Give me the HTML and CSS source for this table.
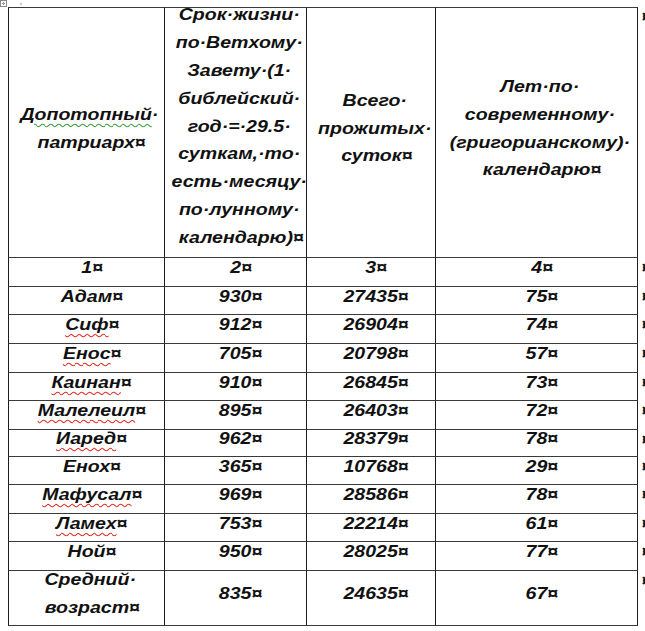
FILE: index.html
```html
<!DOCTYPE html>
<html lang="ru">
<head>
<meta charset="utf-8">
<title>Допотопные патриархи</title>
<link rel="stylesheet" href="styles.css">
</head>
<body>
<div class="topbar">
  <svg class="handle" width="8" height="7" viewBox="0 0 8 7"><rect x="0.5" y="0.5" width="6" height="6" fill="#fff" stroke="#8a8a8a"/><path d="M2 3.5h3M3.5 2v3" stroke="#9a9a9a" stroke-width="1"/></svg>
  <span class="tick"></span>
</div>
<div class="doc">
  <div class="grid">
    <div class="cell c1 top"><div class="t"><span class="green">Допотопный</span><span class="e">·</span><br>патриарх<span class="e">¤</span></div></div>
    <div class="cell top h2"><div class="t">Срок·жизни<span class="e">·</span><br>по·Ветхому<span class="e">·</span><br>Завету·(1<span class="e">·</span><br>библейский<span class="e">·</span><br>год·=·29.5<span class="e">·</span><br>суткам,·то<span class="e">·</span><br>есть·месяцу<span class="e">·</span><br>по·лунному<span class="e">·</span><br>календарю)<span class="e">¤</span></div></div>
    <div class="cell top"><div class="t">Всего<span class="e">·</span><br>прожитых<span class="e">·</span><br>суток<span class="e">¤</span></div></div>
    <div class="cell top"><div class="t">Лет·по<span class="e">·</span><br>современному<span class="e">·</span><br>(григорианскому)<span class="e">·</span><br>календарю<span class="e">¤</span></div></div>
    <div class="mark">¤</div>

    <div class="cell c1"><div class="t">1<span class="e">¤</span></div></div>
    <div class="cell"><div class="t">2<span class="e">¤</span></div></div>
    <div class="cell"><div class="t">3<span class="e">¤</span></div></div>
    <div class="cell"><div class="t">4<span class="e">¤</span></div></div>
    <div class="mark">¤</div>

    <div class="cell c1"><div class="t">Адам<span class="e">¤</span></div></div>
    <div class="cell"><div class="t">930<span class="e">¤</span></div></div>
    <div class="cell"><div class="t">27435<span class="e">¤</span></div></div>
    <div class="cell"><div class="t">75<span class="e">¤</span></div></div>
    <div class="mark">¤</div>

    <div class="cell c1"><div class="t"><span class="sp">Сиф</span><span class="e">¤</span></div></div>
    <div class="cell"><div class="t">912<span class="e">¤</span></div></div>
    <div class="cell"><div class="t">26904<span class="e">¤</span></div></div>
    <div class="cell"><div class="t">74<span class="e">¤</span></div></div>
    <div class="mark">¤</div>

    <div class="cell c1"><div class="t"><span class="sp">Енос</span><span class="e">¤</span></div></div>
    <div class="cell"><div class="t">705<span class="e">¤</span></div></div>
    <div class="cell"><div class="t">20798<span class="e">¤</span></div></div>
    <div class="cell"><div class="t">57<span class="e">¤</span></div></div>
    <div class="mark">¤</div>

    <div class="cell c1"><div class="t"><span class="sp">Каинан</span><span class="e">¤</span></div></div>
    <div class="cell"><div class="t">910<span class="e">¤</span></div></div>
    <div class="cell"><div class="t">26845<span class="e">¤</span></div></div>
    <div class="cell"><div class="t">73<span class="e">¤</span></div></div>
    <div class="mark">¤</div>

    <div class="cell c1"><div class="t"><span class="sp">Малелеил</span><span class="e">¤</span></div></div>
    <div class="cell"><div class="t">895<span class="e">¤</span></div></div>
    <div class="cell"><div class="t">26403<span class="e">¤</span></div></div>
    <div class="cell"><div class="t">72<span class="e">¤</span></div></div>
    <div class="mark">¤</div>

    <div class="cell c1"><div class="t"><span class="sp">Иаред</span><span class="e">¤</span></div></div>
    <div class="cell"><div class="t">962<span class="e">¤</span></div></div>
    <div class="cell"><div class="t">28379<span class="e">¤</span></div></div>
    <div class="cell"><div class="t">78<span class="e">¤</span></div></div>
    <div class="mark">¤</div>

    <div class="cell c1"><div class="t">Енох<span class="e">¤</span></div></div>
    <div class="cell"><div class="t">365<span class="e">¤</span></div></div>
    <div class="cell"><div class="t">10768<span class="e">¤</span></div></div>
    <div class="cell"><div class="t">29<span class="e">¤</span></div></div>
    <div class="mark">¤</div>

    <div class="cell c1"><div class="t"><span class="sp">Мафусал</span><span class="e">¤</span></div></div>
    <div class="cell"><div class="t">969<span class="e">¤</span></div></div>
    <div class="cell"><div class="t">28586<span class="e">¤</span></div></div>
    <div class="cell"><div class="t">78<span class="e">¤</span></div></div>
    <div class="mark">¤</div>

    <div class="cell c1"><div class="t"><span class="sp">Ламех</span><span class="e">¤</span></div></div>
    <div class="cell"><div class="t">753<span class="e">¤</span></div></div>
    <div class="cell"><div class="t">22214<span class="e">¤</span></div></div>
    <div class="cell"><div class="t">61<span class="e">¤</span></div></div>
    <div class="mark">¤</div>

    <div class="cell c1"><div class="t">Ной<span class="e">¤</span></div></div>
    <div class="cell"><div class="t">950<span class="e">¤</span></div></div>
    <div class="cell"><div class="t">28025<span class="e">¤</span></div></div>
    <div class="cell"><div class="t">77<span class="e">¤</span></div></div>
    <div class="mark">¤</div>

    <div class="cell c1"><div class="t">Средний<span class="e">·</span><br>возраст<span class="e">¤</span></div></div>
    <div class="cell"><div class="t">835<span class="e">¤</span></div></div>
    <div class="cell"><div class="t">24635<span class="e">¤</span></div></div>
    <div class="cell"><div class="t">67<span class="e">¤</span></div></div>
    <div class="mark">¤</div>
  </div>
</div>
</body>
</html>
```

FILE: styles.css
```css
html, body {
  margin: 0;
  padding: 0;
  background: #fff;
  overflow: hidden;
}
body {
  width: 645px;
  height: 631px;
  font-family: "Liberation Sans", Arial, sans-serif;
  font-weight: bold;
  font-style: italic;
  font-size: 17px;
  color: #111;
}
.topbar {
  height: 7px;
  display: flex;
  align-items: flex-start;
  gap: 12px;
}
.handle {
  display: block;
}
.tick {
  width: 2px;
  height: 2px;
  margin-top: 3px;
  background: #c8c8c8;
}
.doc {
  padding-left: 8px;
}
.grid {
  display: grid;
  grid-template-columns: 157px 142px 129px 202px 20px;
  grid-template-rows: 251px 29px 28px 29px 29px 28px 29px 27px 28px 29px 28px 29px 55px;
}
.cell {
  box-sizing: border-box;
  border-right: 1px solid #1e1e1e;
  border-bottom: 1px solid #3a3a3a;
  display: flex;
  align-items: center;
  justify-content: center;
  padding-bottom: 8px;
  overflow: visible;
}
.cell.c1 {
  border-left: 1px solid #1e1e1e;
}
.cell.top {
  border-top: 1px solid #3a3a3a;
}
.cell.h2 {
  padding-bottom: 12px;
}
.t {
  white-space: nowrap;
  text-align: center;
  line-height: 27.8px;
  transform: scaleX(1.15);
  transform-origin: center center;
}
.e {
  display: inline-block;
  width: 0;
  overflow: visible;
}
.sp {
  text-decoration: underline wavy #e0302a;
  text-decoration-thickness: 1px;
  text-underline-offset: 3px;
}
.green {
  text-decoration: underline wavy #3aa03a;
  text-decoration-thickness: 1px;
  text-underline-offset: 3px;
}
.mark {
  align-self: start;
  padding-left: 3px;
  line-height: 20px;
  transform: scaleX(1.15);
  transform-origin: left center;
}
```
